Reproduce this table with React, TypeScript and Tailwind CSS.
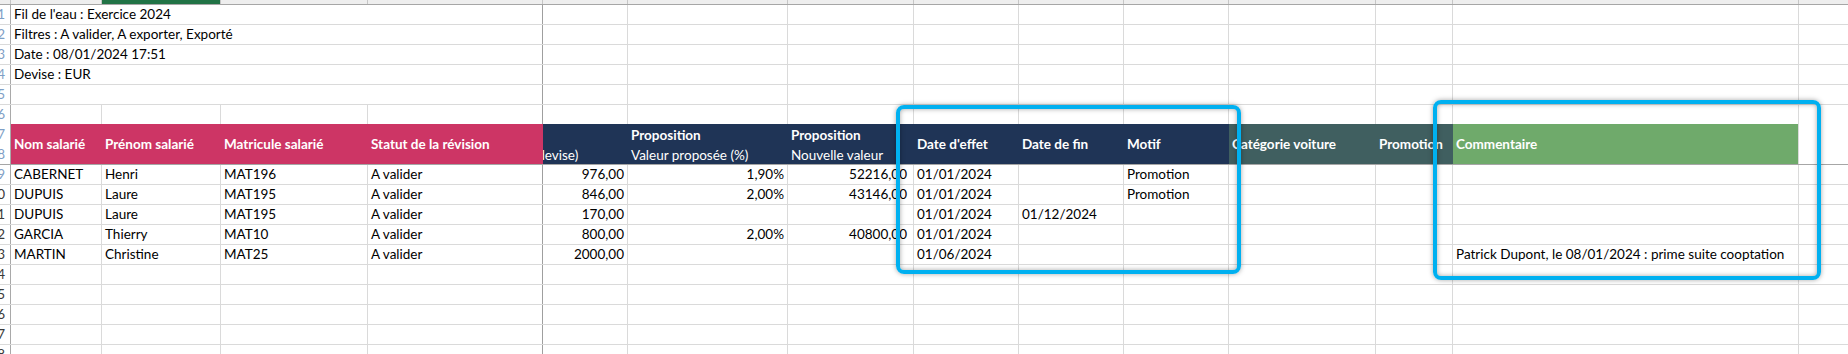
import React from 'react';

type Col = { key: string; w: string; line: string };

const cols: Col[] = [
  { key: 'A', w: 'w-[91px]', line: 'border-[#dadada]' },
  { key: 'B', w: 'w-[119px]', line: 'border-[#dadada]' },
  { key: 'C', w: 'w-[147px]', line: 'border-[#dadada]' },
  { key: 'D', w: 'w-[175px]', line: 'border-[#9f9f9f]' },
  { key: 'E', w: 'w-[85px]', line: 'border-[#dadada]' },
  { key: 'F', w: 'w-[160px]', line: 'border-[#dadada]' },
  { key: 'G', w: 'w-[126px]', line: 'border-[#dadada]' },
  { key: 'H', w: 'w-[105px]', line: 'border-[#dadada]' },
  { key: 'I', w: 'w-[105px]', line: 'border-[#dadada]' },
  { key: 'J', w: 'w-[105px]', line: 'border-[#dadada]' },
  { key: 'K', w: 'w-[147px]', line: 'border-[#dadada]' },
  { key: 'L', w: 'w-[77px]', line: 'border-[#dadada]' },
  { key: 'M', w: 'w-[346px]', line: 'border-[#dadada]' },
];

const info = [
  "Fil de l'eau : Exercice 2024",
  'Filtres : A valider, A exporter, Exporté',
  'Date : 08/01/2024 17:51',
  'Devise : EUR',
  '',
];

const data: Record<string, string>[] = [
  { A: 'CABERNET', B: 'Henri', C: 'MAT196', D: 'A valider', E: '976,00', F: '1,90%', G: '52216,00', H: '01/01/2024', J: 'Promotion' },
  { A: 'DUPUIS', B: 'Laure', C: 'MAT195', D: 'A valider', E: '846,00', F: '2,00%', G: '43146,00', H: '01/01/2024', J: 'Promotion' },
  { A: 'DUPUIS', B: 'Laure', C: 'MAT195', D: 'A valider', E: '170,00', H: '01/01/2024', I: '01/12/2024' },
  { A: 'GARCIA', B: 'Thierry', C: 'MAT10', D: 'A valider', E: '800,00', F: '2,00%', G: '40800,00', H: '01/01/2024' },
  { A: 'MARTIN', B: 'Christine', C: 'MAT25', D: 'A valider', E: '2000,00', H: '01/06/2024', M: 'Patrick Dupont, le 08/01/2024 : prime suite cooptation' },
];

const RowNum = ({ n }: { n: number }) => (
  <div
    className={`w-[11px] shrink-0 border-r border-[#a9a9a9] flex justify-end pr-[5px] overflow-hidden ${
      n < 10 ? 'text-[#7f9fc6]' : 'text-[#3a3a3a]'
    }`}
  >
    <span>{n}</span>
  </div>
);

const Blank = ({ col }: { col: Col }) => <div className={`${col.w} shrink-0 border-r ${col.line}`} />;

export default function App() {
  return (
    <div className="relative w-[1848px] h-[354px] overflow-hidden bg-white font-['Lato',sans-serif] text-[13.5px] text-black leading-[19px]">
      {/* column header strip */}
      <div className="flex h-[5px] bg-[#eeeeee] border-b border-[#a6a6a6]">
        <div className="w-[11px] shrink-0 border-r border-[#c6c6c6]" />
        {cols.map((c) => (
          <div key={c.key} className={`${c.w} shrink-0 border-r border-[#c6c6c6] ${c.key === 'B' ? 'bg-[#217346]' : ''}`} />
        ))}
        <div className="flex-1" />
      </div>

      {/* info rows */}
      {info.map((t, i) => (
        <div key={i} className="flex h-[20px] border-b border-[#dadada]">
          <RowNum n={i + 1} />
          <div className="w-[532px] shrink-0 border-r border-[#9f9f9f] px-[3px] whitespace-nowrap">{t}</div>
          {cols.slice(4).map((c) => (
            <Blank key={c.key} col={c} />
          ))}
          <div className="flex-1" />
        </div>
      ))}

      {/* row 6 */}
      <div className="flex h-[19px]">
        <RowNum n={6} />
        {cols.map((c) => (
          <Blank key={c.key} col={c} />
        ))}
        <div className="flex-1" />
      </div>

      {/* header */}
      <div className="flex h-[41px] border-b border-[#a6a6a6] text-white font-bold leading-[20px]">
        <div className="w-[11px] shrink-0 border-r border-[#a9a9a9] flex flex-col font-normal">
          <div className="h-[20px] flex justify-end pr-[5px] text-[#7f9fc6]">7</div>
          <div className="h-[20px] flex justify-end pr-[5px] text-[#7f9fc6]">8</div>
        </div>
        <div className="w-[532px] shrink-0 flex bg-[#cd3565]">
          <div className="w-[91px] shrink-0 pl-[3px] pt-[10px] whitespace-nowrap">Nom salarié</div>
          <div className="w-[119px] shrink-0 pl-[3px] pt-[10px] whitespace-nowrap">Prénom salarié</div>
          <div className="w-[147px] shrink-0 pl-[3px] pt-[10px] whitespace-nowrap">Matricule salarié</div>
          <div className="w-[175px] shrink-0 pl-[3px] pt-[10px] whitespace-nowrap">Statut de la révision</div>
        </div>
        <div className="w-[686px] shrink-0 flex bg-[#1f3456]">
          <div className="w-[85px] shrink-0 pt-[21px] overflow-hidden font-normal whitespace-nowrap">
            <span className="block ml-[-9px]">(devise)</span>
          </div>
          <div className="w-[160px] shrink-0 pl-[3px] pt-[1px] whitespace-nowrap">
            <div>Proposition</div>
            <div className="font-normal">Valeur proposée (%)</div>
          </div>
          <div className="w-[126px] shrink-0 pl-[3px] pt-[1px] whitespace-nowrap">
            <div>Proposition</div>
            <div className="font-normal">Nouvelle valeur</div>
          </div>
          <div className="w-[105px] shrink-0 pl-[3px] pt-[10px] whitespace-nowrap">Date d'effet</div>
          <div className="w-[105px] shrink-0 pl-[3px] pt-[10px] whitespace-nowrap">Date de fin</div>
          <div className="w-[105px] shrink-0 pl-[3px] pt-[10px] whitespace-nowrap">Motif</div>
        </div>
        <div className="w-[224px] shrink-0 flex bg-[#405f60]">
          <div className="w-[147px] shrink-0 pl-[3px] pt-[10px] whitespace-nowrap">Catégorie voiture</div>
          <div className="w-[77px] shrink-0 pl-[3px] pt-[10px] whitespace-nowrap">Promotion</div>
        </div>
        <div className="w-[345px] shrink-0 bg-[#6faa6b] pl-[3px] pt-[10px] whitespace-nowrap">Commentaire</div>
        <div className="w-px shrink-0 bg-[#dadada]" />
        <div className="flex-1" />
      </div>

      {/* data rows */}
      {data.map((r, i) => (
        <div key={i} className="flex h-[20px] border-b border-[#dadada]">
          <RowNum n={i + 9} />
          {cols.map((c) => {
            const right = c.key === 'E' || c.key === 'F' || c.key === 'G';
            return (
              <div
                key={c.key}
                className={`${c.w} shrink-0 border-r ${c.line} whitespace-nowrap ${
                  right ? 'text-right' : 'pl-[3px]'
                } ${c.key === 'G' ? 'pr-[6px]' : right ? 'pr-[3px]' : ''}`}
              >
                {r[c.key] ?? ''}
              </div>
            );
          })}
          <div className="flex-1" />
        </div>
      ))}

      {/* empty rows */}
      {[14, 15, 16, 17, 18].map((n) => (
        <div key={n} className="flex h-[20px] border-b border-[#dadada]">
          <RowNum n={n} />
          {cols.map((c) => (
            <Blank key={c.key} col={c} />
          ))}
          <div className="flex-1" />
        </div>
      ))}

      {/* highlight frames */}
      <div className="absolute left-[896px] top-[105px] w-[345px] h-[169px] rounded-[8px] border-4 border-[#00b0f0] shadow-[0_0_5px_rgba(0,0,0,0.35),inset_0_0_5px_rgba(0,0,0,0.35)]" />
      <div className="absolute left-[1433px] top-[100px] w-[388px] h-[180px] rounded-[8px] border-4 border-[#00b0f0] shadow-[0_0_5px_rgba(0,0,0,0.35),inset_0_0_5px_rgba(0,0,0,0.35)]" />
    </div>
  );
}
